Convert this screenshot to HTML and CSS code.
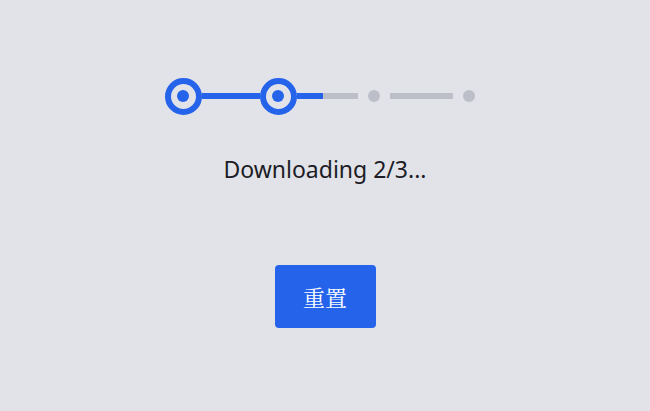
FILE: index.html
```html
<!DOCTYPE html>
<html lang="zh">
<head>
<meta charset="utf-8">
<link rel="stylesheet" href="styles.css">
</head>
<body>
<div class="page">
  <div class="steps">
    <div class="node big"><span class="dot"></span></div>
    <div class="conn c1"><span class="fill" style="width:100%"></span></div>
    <div class="node big"><span class="dot"></span></div>
    <div class="conn c2"><span class="fill" style="width:43%"></span></div>
    <div class="node small"><span class="dot"></span></div>
    <div class="conn c3"></div>
    <div class="node small"><span class="dot"></span></div>
  </div>
  <p class="status">Downloading 2/3...</p>
  <button class="reset">重置</button>
</div>
</body>
</html>
```
FILE: styles.css
```css
html, body {
  margin: 0;
  padding: 0;
  background: #e2e3e8;
}
.page {
  width: 650px;
  height: 411px;
  display: flex;
  flex-direction: column;
  align-items: center;
}
.steps {
  margin-top: 77px;
  margin-left: -1px;
  height: 38px;
  display: flex;
  align-items: center;
}
.node {
  flex: none;
  display: flex;
  align-items: center;
  justify-content: center;
  box-sizing: border-box;
}
.node.big {
  width: 37px;
  height: 37px;
  border: 6px solid #2563eb;
  border-radius: 50%;
}
.node.big .dot {
  width: 12px;
  height: 12px;
  border-radius: 50%;
  background: #2563eb;
}
.node.small {
  width: 32px;
  height: 32px;
}
.node.small .dot {
  width: 12px;
  height: 12px;
  border-radius: 50%;
  background: #bcbec8;
}
.conn {
  flex: none;
  height: 6px;
  background: #bcbec8;
  display: flex;
}
.conn.c1 { width: 58px; }
.conn.c2 { width: 61px; }
.conn.c3 { width: 63px; }
.conn .fill {
  height: 100%;
  background: #2563eb;
}
.status {
  margin: 39px 0 0;
  font-family: "Noto Sans", "Open Sans", sans-serif;
  font-size: 23px;
  line-height: 30px;
  color: #1c1c26;
}
.reset {
  margin-top: 81px;
  width: 101px;
  height: 63px;
  border: none;
  border-radius: 4px;
  background: #2563eb;
  color: #fff;
  font-family: "Noto Serif CJK SC", "AR PL UMing CN", "Noto Serif", serif;
  font-size: 22px;
  padding: 0;
}
```
